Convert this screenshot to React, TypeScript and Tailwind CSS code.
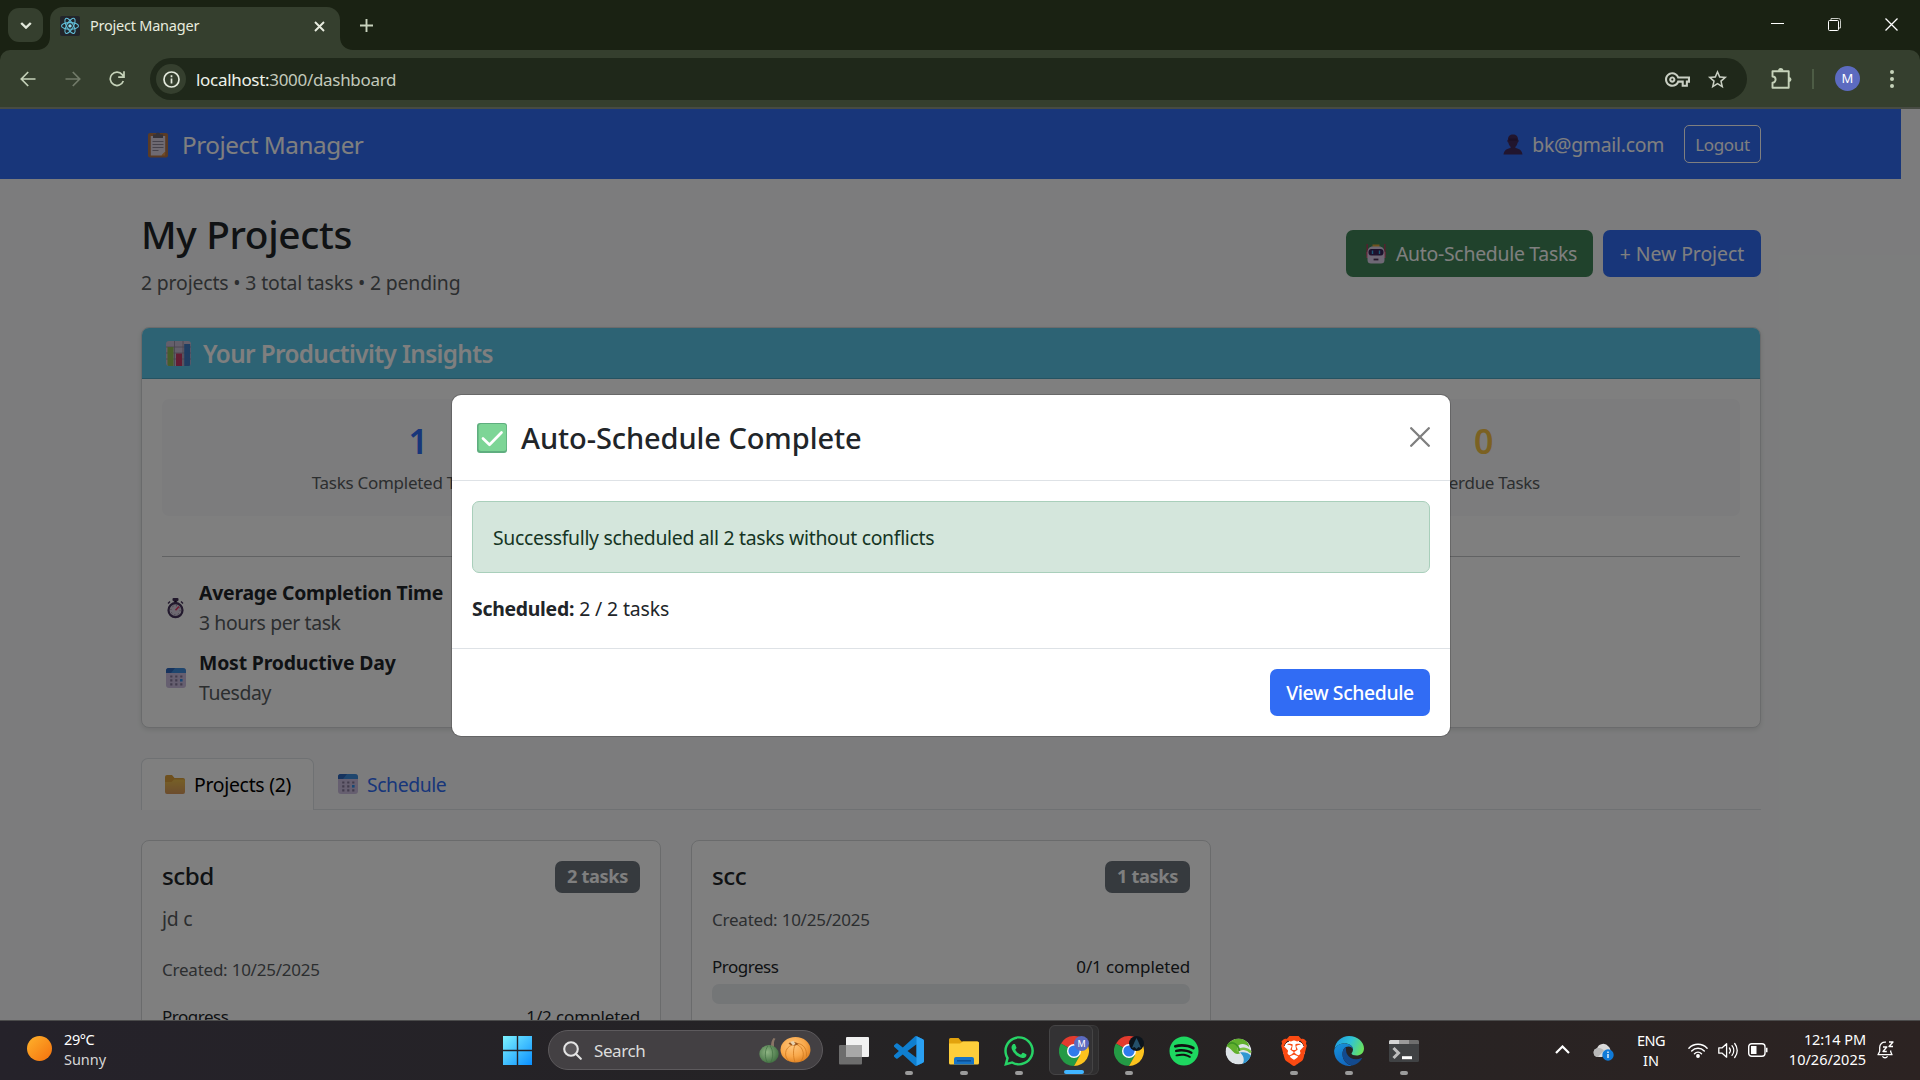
import React from "react";
import { FaSpotify, FaWhatsapp } from "react-icons/fa";
import { SiBrave } from "react-icons/si";
import { MdOutlineVpnKey, MdStarOutline } from "react-icons/md";

/* ---------- emoji-style pictures ---------- */

const Clipboard = () => (
  <svg className="mt-[2px] h-[26px] w-5" viewBox="0 0 20 26">
    <rect x="0" y="1" width="20" height="24.5" rx="2" fill="#b5764a" />
    <path d="M2.8 4h14.4v16l-3.4 3.4h-11z" fill="#dcd5e4" />
    <path d="M17.2 19.5v4h-4z" fill="#e5964c" />
    <path d="M5 2.500h2.500a2.600 2.600 0 0 1 5 0H15V6H5z" fill="#6b6573" />
    <path d="M4.500 9.500h11M4.500 12.500h11M4.500 15.500h11M4.500 18.500h6" stroke="#8d8699" strokeWidth="1" />
  </svg>
);

const Person = () => (
  <svg className="h-[21px] w-5" viewBox="0 0 20 21">
    <path d="M5 5.500C5 2 6.800.5 10 .5s5 1.500 5 5c.9.3.9 2.700-.3 3-.5 2.400-1.500 3.700-2.300 4.300v1.200c3.600.5 6.600 2.300 7.100 6.500H.5c.5-4.200 3.500-6 7.100-6.500v-1.200C6.800 12.200 5.800 10.900 5.300 8.500 4.100 8.200 4.100 5.800 5 5.500z" fill="#432b5c" />
    <path d="M5.800 4.500h8.400v2.200H5.800z" fill="#38204d" />
  </svg>
);

const Robot = () => (
  <svg className="h-[21px] w-5" viewBox="0 0 20 21">
    <path d="M1.200 1v11M18.800 1v11" stroke="#b13a5e" strokeWidth="1.400" />
    <path d="M6.500 1.500h7V4h-7z" fill="#e0a43a" />
    <path d="M.5 9h2v6h-2zM17.500 9h2v6h-2z" fill="#e2557e" />
    <path d="M1.500 9.500c0-4 2.500-6 5-6h7c2.500 0 5 2 5 6V17a3.500 3.500 0 0 1-3.500 3.500H5A3.500 3.500 0 0 1 1.500 17z" fill="#ddd0ea" />
    <rect x="2.500" y="6" width="15" height="6.600" rx="3" fill="#3a2458" />
    <path d="M6.500 7.500v3.400M13.500 7.500v3.400" stroke="#38b4ee" strokeWidth="1.400" />
    <path d="M7.600 16.500h4.800" stroke="#4a3557" strokeWidth="1.800" />
  </svg>
);

const BarChart = () => (
  <svg className="size-[25px]" viewBox="0 0 25 25">
    <rect width="25" height="25" rx="3" fill="#c9bed6" />
    <path d="M0 6h25M0 12h25M0 18h25M8.500 0v25M17 0v25" stroke="#8f869c" strokeWidth=".8" />
    <path d="M1.500 6h6v19H3a1.500 1.500 0 0 1-1.500-1.500z" fill="#8ebd55" />
    <path d="M10 12.500h6V25h-6z" fill="#c83a67" />
    <path d="M18.200 3h6v20.500a1.500 1.500 0 0 1-1.500 1.500h-4.500z" fill="#3e7cc4" />
  </svg>
);

const Stopwatch = () => (
  <svg className="h-[21px] w-[17px]" viewBox="0 0 17 21">
    <rect x="5.500" y="0" width="6" height="3" rx="1" fill="#443159" />
    <path d="M7.500 2h2v3h-2zM1 5.500l2-2M16 5.500l-2-2" stroke="#443159" strokeWidth="1.400" />
    <circle cx="8.500" cy="12.200" r="7" fill="#dad2e2" stroke="#46355c" strokeWidth="2.200" />
    <circle cx="8.500" cy="12.200" r="4.600" fill="none" stroke="#7b6e8a" strokeWidth="1" strokeDasharray="1 2.600" />
    <path d="M8.500 12.200L12 8.500" stroke="#ea3466" strokeWidth="1.500" />
  </svg>
);

const Calendar = () => (
  <svg className="size-5" viewBox="0 0 20 20">
    <rect width="20" height="20" rx="3" fill="#cdbfe0" />
    <path d="M0 5V3a3 3 0 0 1 3-3h14a3 3 0 0 1 3 3v2z" fill="#3f8cdc" />
    <path d="M0 5V3a3 3 0 0 1 3-3h6L5 5z" fill="#2c66bd" />
    <path
      d="M4.200 7.400h2.200v2.200H4.200zM9.200 7.400h2.200v2.200H9.200zM14.200 7.400h2.200v2.200h-2.200zM4.200 11.300h2.200v2.200H4.200zM9.200 11.300h2.200v2.200H9.200zM4.200 15.200h2.200v2.200H4.200zM9.200 15.200h2.200v2.200H9.200zM14.200 15.200h2.200v2.200h-2.200z"
      fill="#84799a"
    />
    <path d="M14 11h2.600v2.600H14z" fill="#2f8fe8" />
  </svg>
);

const Folder = () => (
  <svg className="h-[19px] w-5" viewBox="0 0 20 19">
    <path d="M0 2a2 2 0 0 1 2-2h5l2.500 3H18a2 2 0 0 1 2 2v6H0z" fill="#dca03c" />
    <path d="M0 7h6.500L9 4.500h9.500A1.500 1.500 0 0 1 20 6v11a2 2 0 0 1-2 2H2a2 2 0 0 1-2-2z" fill="url(#fold)" />
    <defs>
      <linearGradient id="fold" x1="0" y1="0" x2="0" y2="1">
        <stop offset="0" stopColor="#edbf4e" />
        <stop offset="1" stopColor="#d99a5c" />
      </linearGradient>
    </defs>
  </svg>
);

const CheckBox = () => (
  <svg className="size-[30px]" viewBox="0 0 30 30">
    <rect width="30" height="30" rx="3" fill="#5fae7f" />
    <rect x="1.600" y="1" width="27.600" height="27" rx="2.500" fill="#7dd596" />
    <path d="M6 15.500l6.500 6.200L24.500 9.500" fill="none" stroke="#fff" strokeWidth="2.700" strokeLinecap="round" strokeLinejoin="round" />
  </svg>
);

/* ---------- browser chrome ---------- */

const ReactLogo = () => (
  <svg className="size-5" viewBox="0 0 20 20">
    <rect width="20" height="20" rx="2" fill="#22252a" />
    <g fill="none" stroke="#62bfda" strokeWidth="1.050">
      <ellipse cx="10" cy="9.900" rx="8.500" ry="3.300" />
      <ellipse cx="10" cy="9.900" rx="8.500" ry="3.300" transform="rotate(60 10 9.900)" />
      <ellipse cx="10" cy="9.900" rx="8.500" ry="3.300" transform="rotate(120 10 9.900)" />
    </g>
    <circle cx="10" cy="9.900" r="1.700" fill="#8adcf2" />
  </svg>
);

const TabStrip = () => (
  <div className="flex h-[50px] bg-[#1a2213]">
    <div className="ml-2 mt-2 flex h-[34px] w-[35px] items-center justify-center rounded-[11px] bg-[#353f2e]">
      <svg className="h-[7px] w-3" viewBox="0 0 12 7" fill="none" stroke="#e3e9dc" strokeWidth="2.400">
        <path d="M1.200 1L6 5.600 10.800 1" />
      </svg>
    </div>
    <div className="-ml-[6px] mt-[7px] flex h-[43px] w-[316px]">
      <svg className="mt-[30px] h-[13px] w-[13px] shrink-0" viewBox="0 0 13 13">
        <path d="M13 0v13H0C7 13 13 8 13 0z" fill="#353f2e" />
      </svg>
      <div className="flex h-[43px] w-[291px] items-center rounded-t-[13px] bg-[#353f2e] pb-[7px] pl-[10px] pr-[15px]">
        <div className="mt-px"><ReactLogo /></div>
        <span className="ml-[10px] mt-[2px] text-[14.500px] tracking-[-0.230px] text-[#e8ecdf]">Project Manager</span>
        <svg className="ml-auto mt-[2px] size-[11px]" viewBox="0 0 11 11" stroke="#e8ecdf" strokeWidth="1.900">
          <path d="M1 1l9 9M10 1l-9 9" />
        </svg>
      </div>
      <svg className="mt-[30px] h-[13px] w-[13px] shrink-0" viewBox="0 0 13 13">
        <path d="M0 0v13h13C6 13 0 8 0 0z" fill="#353f2e" />
      </svg>
    </div>
    <svg className="ml-[7px] mt-[19px] size-[13px]" viewBox="0 0 13 13" stroke="#c8d2bd" strokeWidth="1.900">
      <path d="M6.500 0v13M0 6.500h13" />
    </svg>
    <div className="ml-auto mr-[22px] mt-[18px] flex gap-11">
      <svg className="h-[13px] w-[13px]" viewBox="0 0 13 13" stroke="#fff"><path d="M0 5.500h13" /></svg>
      <svg className="h-[13px] w-[13px]" viewBox="0 0 13 13" fill="none" stroke="#fff">
        <path d="M3 2.500V.5h7.500a2 2 0 0 1 2 2V10h-2" stroke="#c6c9c3" />
        <rect x=".5" y="2.500" width="10" height="10" rx="1" />
      </svg>
      <svg className="h-[13px] w-[13px]" viewBox="0 0 13 13" stroke="#fff" strokeWidth="1.300"><path d="M.5.5l12 12M12.500.5l-12 12" /></svg>
    </div>
  </div>
);

const Toolbar = () => (
  <div className="bg-[#1a2213]">
    <div className="flex h-[57px] rounded-t-[10px] bg-[#353f2e] pt-2">
      <svg className="ml-5 mt-[13px] size-4" viewBox="0 0 16 16" fill="none" stroke="#c5d2b9" strokeWidth="1.700">
        <path d="M15.500 8H1.500M8.200 1L1.300 8l6.900 7" />
      </svg>
      <svg className="ml-[29px] mt-[13px] size-4" viewBox="0 0 16 16" fill="none" stroke="#727b69" strokeWidth="1.700">
        <path d="M.5 8h14M7.800 1l6.900 7-6.900 7" />
      </svg>
      <svg className="ml-[28px] mt-[13px] size-4" viewBox="0 0 16 16" fill="none" stroke="#c5d2b9" strokeWidth="1.700">
        <path d="M14.300 10A6.700 6.700 0 1 1 13.200 3.600L14.700 5.500M15 .3v5.800H9.200" />
      </svg>
      <div className="ml-[25px] flex h-[42px] w-[1597px] items-center rounded-full bg-[#1f281a] pl-[6px] pr-[18px]">
        <div className="flex size-[30px] items-center justify-center rounded-full bg-[#353f2e]">
          <svg className="size-[17px]" viewBox="0 0 17 17" fill="none" stroke="#e3e9dc" strokeWidth="1.700">
            <circle cx="8.500" cy="8.500" r="7.500" />
            <path d="M8.500 7.600v4.900M8.500 4.300v1.900" />
          </svg>
        </div>
        <span className="ml-[10px] mt-px text-[17px] tracking-[-0.310px] text-[#c3cabc]">
          <span className="text-[#eef2e9]">localhost:</span>3000/dashboard
        </span>
        <MdOutlineVpnKey className="ml-auto size-[25px] text-[#c9cfc3]" />
        <MdStarOutline className="ml-[16px] size-[23px] text-[#c9cfc3]" />
      </div>
      <svg className="ml-6 mt-[10px] h-[22px] w-[22px]" viewBox="0 0 22 22" fill="none" stroke="#c5d2b9" strokeWidth="1.900" strokeLinejoin="round">
        <path d="M1.500 3.200h16.200v16.600H1.500v-5.100a2.900 2.900 0 0 0 0-6.200z" />
        <path d="M7 2.800a2.700 2.700 0 0 1 5.400 0zM18 9a2.500 2.500 0 0 1 0 5z" fill="#c5d2b9" stroke="none" />
      </svg>
      <div className="ml-[19px] mt-[11px] h-5 w-[2px] bg-[#4d5c45]" />
      <div className="ml-[21px] mt-2 flex size-[25px] items-center justify-center rounded-full bg-[#5c6bc0] text-[13px] text-white">M</div>
      <div className="ml-[30px] mt-3 flex flex-col gap-[3px]">
        <div className="size-1 rounded-full bg-[#c5d2b9]" />
        <div className="size-1 rounded-full bg-[#c5d2b9]" />
        <div className="size-1 rounded-full bg-[#c5d2b9]" />
      </div>
    </div>
    <div className="h-[2px] bg-[#474b43]" />
  </div>
);

/* ---------- dashboard ---------- */

const Navbar = () => (
  <nav className="mr-[19px] flex h-[70px] items-center bg-[#316cf4] pl-[148px] pr-[140px] text-white">
    <Clipboard />
    <span className="ml-[14px] mt-[2px] text-[24.250px] tracking-[-0.460px]">Project Manager</span>
    <div className="ml-auto flex items-center">
      <Person />
      <span className="ml-[9px] mt-[2px] text-[19.400px] tracking-[-0.280px]">bk@gmail.com</span>
      <div className="ml-[20px] flex h-[38px] w-[77px] items-center justify-center rounded-[5px] border border-white pt-px text-[17px] tracking-[-0.330px]">
        Logout
      </div>
    </div>
  </nav>
);

const PageHeader = () => (
  <div className="flex items-start justify-between">
    <div>
      <h2 className="translate-y-px text-[38.800px] leading-[48px] font-medium tracking-[-0.330px]">My Projects</h2>
      <p className="mt-[10px] translate-y-px text-[19.400px] leading-[30px] tracking-[-0.150px] text-[#585c5f]">
        2 projects • 3 total tasks • 2 pending
      </p>
    </div>
    <div className="mt-[21px] flex gap-[10px] text-[19.400px] text-white">
      <div className="flex h-[47px] w-[247px] items-center rounded-[7px] bg-[#408458] pl-5">
        <Robot />
        <span className="ml-[10px] tracking-[-0.270px]">Auto-Schedule Tasks</span>
      </div>
      <div className="flex h-[47px] w-[158px] items-center justify-center rounded-[7px] bg-[#316cf4]">
        <span className="tracking-[-0.060px]">+ New Project</span>
      </div>
    </div>
  </div>
);

const Stat = ({ value, label, tone }: { value: string; label: string; tone: string }) => (
  <div className="flex h-[117px] flex-col items-center rounded-[7px] bg-[#f8f9fa] pt-[21px]">
    <div className={`text-[34px] leading-[42px] font-semibold ${tone}`}>{value}</div>
    <div className="mt-[8px] text-[17px] leading-[26px] tracking-[-0.270px] text-[#585c5f]">{label}</div>
  </div>
);

const Insight = ({ icon, title, value, spacing, valueSpacing }: { icon: React.ReactNode; title: string; value: string; spacing: string; valueSpacing: string }) => (
  <div className="flex items-center">
    <div className="mr-[10px] flex w-[27px] justify-center">{icon}</div>
    <div className="text-[19.400px] leading-[30px]">
      <div className={`font-bold ${spacing}`}>{title}</div>
      <div className={`text-[#585c5f] ${valueSpacing}`}>{value}</div>
    </div>
  </div>
);

const InsightsCard = () => (
  <div className="mt-[30px] h-[401px] overflow-hidden rounded-[8px] border border-[#d5d7d9] bg-white shadow-[0_2px_5px_rgba(0,0,0,0.100)]">
    <div className="flex h-[51px] items-center border-b border-[#4aa6c4] bg-[#5ac6e8] pl-6 text-white">
      <BarChart />
      <span className="ml-[12px] mt-[2px] text-[24.250px] font-semibold tracking-[-0.600px]">Your Productivity Insights</span>
    </div>
    <div className="px-5">
      <div className="mt-5 grid grid-cols-3 gap-5">
        <Stat value="1" label="Tasks Completed This Week" tone="text-[#316cf4]" />
        <Stat value="2" label="Pending Tasks" tone="text-[#408458]" />
        <Stat value="0" label="Overdue Tasks" tone="text-[#f6c344]" />
      </div>
      <div className="mt-10 border-t border-[#c2c4c6]" />
      <div className="mt-[21px] flex flex-col gap-[10px]">
        <Insight icon={<Stopwatch />} title="Average Completion Time" value="3 hours per task" spacing="tracking-[-0.230px]" valueSpacing="tracking-[-0.380px]" />
        <Insight icon={<Calendar />} title="Most Productive Day" value="Tuesday" spacing="tracking-[-0.160px]" valueSpacing="tracking-[-0.370px]" />
      </div>
    </div>
  </div>
);

const Tabs = () => (
  <div className="mt-[30px] flex h-[52px] items-end border-b border-[#dee2e6] text-[19.400px]">
    <div className="-mb-px flex h-[52px] w-[173px] items-center rounded-t-[7px] border border-b-0 border-[#dee2e6] bg-white pl-[23px] text-black">
      <Folder />
      <span className="ml-[9px] tracking-[-0.280px]">Projects (2)</span>
    </div>
    <div className="flex h-[51px] items-center pl-6 text-[#316cf4]">
      <Calendar />
      <span className="ml-[9px] mt-[2px] tracking-[-0.420px]">Schedule</span>
    </div>
  </div>
);

const ProjectCard = ({ name, tasks, description, done }: { name: string; tasks: string; description?: string; done: string }) => (
  <div className="h-[300px] rounded-[8px] border border-[#d5d7d9] bg-white px-5 pt-5">
    <div className="flex items-start justify-between">
      <h5 className="text-[24.250px] leading-[30px] font-medium tracking-[-0.500px]">{name}</h5>
      <div className="flex h-8 w-[85px] items-center justify-center rounded-[7px] bg-[#6c757d] pb-px text-[18.200px] leading-none font-bold tracking-[-0.340px] text-white">
        {tasks}
      </div>
    </div>
    {description && <p className="mt-[11px] text-[19.400px] leading-[30px] tracking-[-0.200px] text-[#585c5f]">{description}</p>}
    <p className={`text-[17px] leading-[26px] tracking-[-0.230px] text-[#585c5f] ${description ? "mt-[23px]" : "mt-[14px]"}`}>
      Created: 10/25/2025
    </p>
    <div className="mt-[21px] flex justify-between text-[17px] leading-[26px]">
      <span className="tracking-[-0.480px]">Progress</span>
      <span className="tracking-[-0.110px]">{done}</span>
    </div>
    <div className="mt-[4px] h-5 rounded-[7px] bg-[#e9ecef]">
      {description && <div className="h-5 w-1/2 rounded-l-[7px] bg-[#316cf4]" />}
    </div>
  </div>
);

const Modal = () => (
  <div className="flex h-[341px] w-[998px] flex-col rounded-[9px] bg-white shadow-[0_0_0_1px_rgba(0,0,0,0.180)]">
    <div className="flex h-[86px] items-center border-b border-[#dee2e6] pr-5 pl-[25px]">
      <CheckBox />
      <span className="ml-[14px] text-[29px] font-medium tracking-[-0.080px]">Auto-Schedule Complete</span>
      <svg className="ml-auto mb-[2px] size-5" viewBox="0 0 20 20" stroke="#7f7f7f" strokeWidth="2.300" strokeLinecap="round">
        <path d="M1.200 1.200l17.600 17.600M18.800 1.200L1.200 18.800" />
      </svg>
    </div>
    <div className="h-[168px] border-b border-[#dee2e6] px-5 pt-5">
      <div className="flex h-[72px] items-center rounded-[7px] border border-[#a9cfbb] bg-[#d4e6dc] px-5 text-[19.400px] tracking-[-0.300px] text-[#153524]">
        <span className="mt-[2px]">Successfully scheduled all 2 tasks without conflicts</span>
      </div>
      <p className="mt-5 translate-y-px text-[19.400px] leading-[30px]">
        <b className="tracking-[-0.270px]">Scheduled:</b> <span className="tracking-[-0.120px]">2 / 2 tasks</span>
      </p>
    </div>
    <div className="flex justify-end px-5 pt-[20px]">
      <div className="flex h-[47px] w-40 items-center justify-center rounded-[7px] bg-[#316cf4] text-[19.400px] font-medium tracking-[-0.390px] text-white">
        View Schedule
      </div>
    </div>
  </div>
);

const Dashboard = () => (
  <main className="relative h-[911px] overflow-hidden bg-[#f8f9fa] text-[#212529]">
    <Navbar />
    <div className="pt-[30px] pr-[159px] pl-[141px]">
      <PageHeader />
      <InsightsCard />
      <Tabs />
      <div className="mt-[30px] grid grid-cols-3 gap-[30px]">
        <ProjectCard name="scbd" tasks="2 tasks" description="jd c" done="1/2 completed" />
        <ProjectCard name="scc" tasks="1 tasks" done="0/1 completed" />
      </div>
    </div>
    <div className="absolute inset-0 flex items-start justify-center bg-black/50 pt-[286px] pr-[18px]">
      <Modal />
    </div>
  </main>
);

/* ---------- taskbar ---------- */

const WindowsLogo = () => (
  <svg className="size-[29px]" viewBox="0 0 29 29">
    <defs>
      <linearGradient id="win" x1="0" y1="0" x2="1" y2="1">
        <stop offset="0" stopColor="#7df3ff" />
        <stop offset="1" stopColor="#0a8fff" />
      </linearGradient>
    </defs>
    <path d="M0 0h13.800v13.800H0zM15.200 0H29v13.800H15.200zM0 15.200h13.800V29H0zM15.200 15.200H29V29H15.200z" fill="url(#win)" />
  </svg>
);

const Pumpkins = () => (
  <svg className="h-[28px] w-[52px]" viewBox="0 0 52 28">
    <defs>
      <radialGradient id="gourd" cx=".4" cy=".4" r=".65">
        <stop offset="0" stopColor="#8fb584" />
        <stop offset="1" stopColor="#3f6e40" />
      </radialGradient>
      <radialGradient id="pumpkin" cx=".4" cy=".35" r=".7">
        <stop offset="0" stopColor="#ffc67c" />
        <stop offset=".6" stopColor="#f9a84a" />
        <stop offset="1" stopColor="#dd7f20" />
      </radialGradient>
    </defs>
    <path d="M12 10.500c0-3 .5-6 2.500-8.500l2 .8C14.600 5 14.800 8 15.200 11.500z" fill="#8a7566" />
    <ellipse cx="10" cy="18" rx="9.700" ry="9" fill="url(#gourd)" />
    <path d="M9 10c-3.500 4-3.500 12-.5 16.500M11 10c3.500 4 3.500 12 .5 16.500" fill="none" stroke="#3f6e40" strokeWidth=".7" />
    <ellipse cx="36.500" cy="13.700" rx="15" ry="12.800" fill="url(#pumpkin)" />
    <path d="M33 9c-8 3-8 12-3 16M36 9c-2 4-2 12 0 17M38 8.500c7 3 8 12 4 16.500M39 7.500c6 1 9 6 8.500 13" fill="none" stroke="#d07a20" strokeWidth=".8" />
    <path d="M29.500 7.500c2.500-2 7-2 10 .5-2 1-3 1.500-5 1.500s-4-.8-5-2z" fill="#9c551a" />
    <path d="M31 6l3.500-1 2 3-2.500 1.600z" fill="#e8d3b0" />
  </svg>
);

const TaskView = () => (
  <svg className="size-[30px]" viewBox="0 0 30 30">
    <rect x="7" y="1" width="23" height="20" rx="1" fill="#f1f1f1" />
    <rect x="0" y="9" width="23" height="19.500" rx="1" fill="#6d6d6d" />
    <rect x="7" y="9" width="16" height="12" fill="#a8a8a8" />
  </svg>
);

const VsCode = () => (
  <svg className="size-[30px]" viewBox="0 0 24 24">
    <path fill="#0f7fd0" d="M23.150 2.587L18.210.21a1.494 1.494 0 0 0-1.705.29l-9.460 8.630-4.120-3.128a.999.999 0 0 0-1.276.057L.327 7.261A1 1 0 0 0 .326 8.740L3.899 12 .326 15.260a1 1 0 0 0 .001 1.479L1.650 17.940a.999.999 0 0 0 1.276.057l4.120-3.128 9.460 8.630a1.492 1.492 0 0 0 1.704.29l4.942-2.377A1.500 1.500 0 0 0 24 20.060V3.939a1.500 1.500 0 0 0-.85-1.352zm-5.146 14.861L10.826 12l7.178-5.448v10.896z" />
    <path fill="#2aa0f2" d="M18 .2l5.150 2.387A1.500 1.500 0 0 1 24 3.939V20.060a1.500 1.500 0 0 1-.85 1.352L18 23.800z" />
  </svg>
);

const Explorer = () => (
  <svg className="size-[30px]" viewBox="0 0 30 30">
    <path d="M0 3.500A1.500 1.500 0 0 1 1.500 2h8l3 3.500H28a2 2 0 0 1 2 2V10H0z" fill="#e2a20d" />
    <path d="M0 7.500h11l3-2h14.500A1.500 1.500 0 0 1 30 7v20a1.500 1.500 0 0 1-1.500 1.500h-27A1.500 1.500 0 0 1 0 27z" fill="#fdce3b" />
    <path d="M5 28.500V23a2 2 0 0 1 2-2h16a2 2 0 0 1 2 2v5.500z" fill="#1673c6" />
    <path d="M8 24.800h14" stroke="#0b4f94" strokeWidth="1.500" />
  </svg>
);

const Chrome = ({ badge }: { badge: React.ReactNode }) => (
  <svg className="size-[30px]" viewBox="0 0 30 30">
    <path d="M15 15L2 7.500A15 15 0 0 1 28 7.500z" fill="#e33b2e" />
    <path d="M15 15L2 7.500A15 15 0 0 0 15 30l6.500-11z" fill="#249a45" />
    <path d="M15 8h13.300A15 15 0 0 1 15 30l6.200-11z" fill="#fcc31e" />
    <circle cx="15" cy="15" r="7" fill="#fff" />
    <circle cx="15" cy="15" r="5.600" fill="#2f7bec" />
    {badge}
  </svg>
);

const Globe = () => (
  <svg className="size-[27px]" viewBox="0 0 27 27">
    <defs>
      <clipPath id="disc"><circle cx="13.500" cy="13.500" r="13" /></clipPath>
    </defs>
    <g clipPath="url(#disc)">
      <circle cx="13.500" cy="13.500" r="13" fill="#dde3e7" />
      <path d="M1 8C4 2 12-1 18 1c4 1.500 6 5 6 8-3-3-7-4-10-2-2 1.500-2 5 1 8.500-2 .8-4 .5-5.500-.5C7 13 5 9.500 1 8z" fill="#62b02e" />
      <path d="M13.500 9c2.500-3 7-3 9.500 0-3-.5-6 0-8 3z" fill="#dde3e7" />
      <path d="M12 13c4-3.500 10-3 14 1.500" stroke="#7cc142" strokeWidth="2.600" fill="none" />
      <path d="M15 14.500c4-1 9 0 12 4-1 5-6 8.500-10.500 9 3-3.500 3.500-9-1.500-13z" fill="#2f97d2" />
      <path d="M2 7C7 3 13 5 14.500 13" stroke="#3f9424" strokeWidth="1.800" fill="none" />
    </g>
  </svg>
);

const Edge = () => (
  <svg className="size-[30px]" viewBox="0 0 30 30">
    <defs>
      <linearGradient id="edgeTop" x1="0" y1=".3" x2="1" y2=".6">
        <stop offset="0" stopColor="#1f9de0" />
        <stop offset=".5" stopColor="#2fc3d6" />
        <stop offset="1" stopColor="#6be25a" />
      </linearGradient>
      <linearGradient id="edgeMid" x1="0" y1="0" x2=".4" y2="1">
        <stop offset="0" stopColor="#1794dc" />
        <stop offset="1" stopColor="#1268bf" />
      </linearGradient>
    </defs>
    <path d="M.5 13C1.500 5.500 7.500 0 15 0c8.500 0 15 6 15 12.500 0 4.500-3.500 7-7.500 7-3 0-5-1-5-2 0-.8 1.500-1.500 1.500-4C19 10 15.500 7.500 11 7.500 6 7.500 2 9.500.5 13z" fill="url(#edgeTop)" />
    <path d="M.1 15C.5 10.500 5 7.500 10.500 7.500c5 0 8.500 2.800 8.500 6 0-1.500-2-3-4.500-3-4 0-6 3.500-6 7.500 0 6 4 10.500 9.500 11.700A15 15 0 0 1 .1 15z" fill="url(#edgeMid)" />
    <path d="M12 11c-2.500 1.500-3.500 4-3.500 7 0 6 4.500 11 10 11.500 4-1 7.500-3.500 9.300-6.700.3-.6-.3-.9-.8-.6-5 2.300-11.500.8-14-4.200-1.200-2.500-1-5-1-7z" fill="#134a8e" />
  </svg>
);

const Terminal = () => (
  <svg className="size-[30px]" viewBox="0 0 30 30">
    <rect x="0" y="4" width="30" height="22" rx="1.500" fill="#404244" />
    <path d="M0 8V5.500A1.500 1.500 0 0 1 1.500 4H10v4z" fill="#d3d3d3" />
    <path d="M10 4h10v4H10z" fill="#9a9a9a" />
    <path d="M20 4h8.500A1.500 1.500 0 0 1 30 5.500V8H20z" fill="#6e6e6e" />
    <path d="M4.500 12l5 5-5 5" fill="none" stroke="#bdbdbd" strokeWidth="3" />
    <path d="M13 21.700h10" stroke="#fff" strokeWidth="3" />
  </svg>
);

const TaskItem = ({ children, running }: { children: React.ReactNode; running?: boolean }) => (
  <div className="flex w-[55px] flex-col items-center pt-[15px]">
    <div className="flex h-[30px] items-center">{children}</div>
    {running && <div className="mt-[5px] h-1 w-2 rounded-full bg-[#9b9b9b]" />}
  </div>
);

const Taskbar = () => (
  <div className="flex h-[60px] border-t border-[#4b4b4b] bg-linear-to-r from-[#25222a] via-[#252324] to-[#2c2322] text-[14.500px] text-white">
    <div className="flex w-[503px] pt-[8px] pl-[26px]">
      <svg className="mt-[6px] size-[27px]" viewBox="0 0 27 27">
        <defs>
          <linearGradient id="sun" x1="0" y1="0" x2="1" y2="1">
            <stop offset="0" stopColor="#ffb32c" />
            <stop offset="1" stopColor="#f4700d" />
          </linearGradient>
        </defs>
        <circle cx="13.500" cy="13.500" r="12.500" fill="url(#sun)" />
      </svg>
      <div className="ml-[11px] leading-5">
        <div className="tracking-[-0.400px]">29°C</div>
        <div className="tracking-[-0.040px] text-[#d6d6d6]">Sunny</div>
      </div>
    </div>
    <div className="pt-[15px]"><WindowsLogo /></div>
    <div className="mt-[9px] ml-4 flex h-10 w-[275px] items-center rounded-full border border-[#5d5a5d] bg-[#434043] pr-[11px] pl-[14px]">
      <svg className="size-[19px]" viewBox="0 0 19 19" fill="none" stroke="#e4e4e4" strokeWidth="2.100" strokeLinecap="round">
        <circle cx="8" cy="8" r="6.800" fill="#5a575a" />
        <path d="M13 13l4.800 4.800" />
      </svg>
      <span className="mt-[2px] ml-[12px] text-[17px] tracking-[-0.430px] text-[#dcdcdc]">Search</span>
      <div className="ml-auto"><Pumpkins /></div>
    </div>
    <div className="ml-[3px] flex">
      <TaskItem><TaskView /></TaskItem>
      <TaskItem running><VsCode /></TaskItem>
      <TaskItem running><Explorer /></TaskItem>
      <TaskItem running><FaWhatsapp className="size-[34px] text-[#27d366]" /></TaskItem>
      <div className="flex w-[55px] pt-[4px]">
        <div className="z-10 ml-[3px] flex h-[50px] w-[44px] shrink-0 flex-col items-center rounded-[6px] border border-[#454445] bg-[#333234] pt-[10px]">
          <div className="ml-[6px]">
            <Chrome
              badge={
                <g>
                  <circle cx="22.500" cy="7.500" r="7.500" fill="#5c6bc0" />
                  <text x="22.500" y="10.700" fontSize="9" textAnchor="middle" fill="#fff">M</text>
                </g>
              }
            />
          </div>
          <div className="mt-[4px] ml-[5px] h-1 w-5 shrink-0 rounded-full bg-[#41b5ff]" />
        </div>
        <div className="-ml-[6px] h-[50px] w-3 shrink-0 rounded-r-[6px] border-y border-r border-[#3a393a] bg-[#2f2e2f]" />
      </div>
      <TaskItem running>
        <Chrome
          badge={
            <g>
              <circle cx="22.500" cy="7.500" r="7.500" fill="#0b141c" />
              <path d="M18 12l2.500-6 2-4 2 4 2.500 6-2.500-1-2 2-2-2z" fill="#24506a" />
            </g>
          }
        />
      </TaskItem>
      <TaskItem>
        <div className="flex size-[30px] items-center justify-center rounded-full bg-[radial-gradient(#111_60%,transparent_62%)]">
          <FaSpotify className="size-[30px] text-[#1ed760]" />
        </div>
      </TaskItem>
      <TaskItem><Globe /></TaskItem>
      <TaskItem running>
        <div className="flex size-[30px] items-center justify-center bg-[radial-gradient(#fff_50%,transparent_52%)]">
          <SiBrave className="size-[30px] text-[#fb4a12]" />
        </div>
      </TaskItem>
      <TaskItem running><Edge /></TaskItem>
      <TaskItem running><Terminal /></TaskItem>
    </div>
    <div className="mr-[26px] ml-auto flex">
      <svg className="mt-[24px] h-[9px] w-[15px]" viewBox="0 0 15 9" fill="none" stroke="#fff" strokeWidth="2.200">
        <path d="M1 8l6.500-6.500L14 8" />
      </svg>
      <svg className="mt-[21px] ml-[23px] h-[20px] w-[21px]" viewBox="0 0 21 20">
        <path d="M4.500 15A4.500 4.500 0 0 1 4 6.200 6.600 6.600 0 0 1 15.500 4.500c1.500 1 2 3 2 5L9 15z" fill="#dadada" />
        <path d="M4 6.200c3-.8 5 0 7 2.300L5 15h-.5A4.500 4.500 0 0 1 4 6.200z" fill="#b8b8b8" />
        <circle cx="15" cy="13" r="5.700" fill="#0f7ad8" />
        <path d="M15 12v4M15 9.500v1.400" stroke="#fff" strokeWidth="1.300" />
      </svg>
      <div className="mt-[9px] ml-[17px] w-10 text-center leading-5">
        <div className="tracking-[-0.500px]">ENG</div>
        <div>IN</div>
      </div>
      <svg className="mt-[21px] ml-[17px] h-[16px] w-[20px]" viewBox="0 0 20 16" fill="none" stroke="#fff" strokeWidth="1.400" strokeLinecap="round">
        <path d="M.9 6.200a12.400 12.400 0 0 1 18.200 0M3.700 9a8.700 8.700 0 0 1 12.600 0M6.500 11.700a5 5 0 0 1 7 0" />
        <circle cx="10" cy="14" r="1.200" fill="#fff" />
      </svg>
      <svg className="mt-[21px] ml-[10px] h-[17px] w-5" viewBox="0 0 20 17" fill="none" stroke="#fff" strokeWidth="1.300" strokeLinejoin="round" strokeLinecap="round">
        <path d="M.8 5.800h3.400L8.600 1.800v13.400L4.200 11.200H.8z" />
        <path d="M11.400 6a4 4 0 0 1 0 5M14 3.700a7.500 7.500 0 0 1 0 9.600M16.700 1.500a11 11 0 0 1 0 14" />
      </svg>
      <svg className="mt-[22px] ml-[10px] h-[14px] w-5" viewBox="0 0 20 14" fill="none" stroke="#fff" strokeWidth="1.400">
        <rect x=".7" y=".7" width="16.300" height="12.600" rx="3" />
        <path d="M3 3h5.500v8H3zM18 4.800h1.500v4.400H18z" fill="#fff" stroke="none" />
      </svg>
      <div className="mt-[8px] ml-[18px] w-20 text-right leading-5">
        <div className="tracking-[-0.080px]">12:14 PM</div>
        <div className="tracking-[0px]">10/26/2025</div>
      </div>
      <svg className="mt-[20px] ml-[11px] h-[18px] w-[17px]" viewBox="0 0 17 18" fill="none" stroke="#fff" strokeWidth="1.300" strokeLinejoin="round">
        <path d="M9 1.200C5 .8 2.700 3 2.700 6.500v3.700L1 13.700h14l-1.300-3V9.500" />
        <path d="M5.500 15.200a2.800 2.800 0 0 0 5 0" />
        <path d="M6 6h3.800L6 10.500h3.800M12 1h4l-4 4.500h4" />
      </svg>
    </div>
  </div>
);

export default function App() {
  return (
    <div className="h-[1080px] w-[1920px] overflow-hidden bg-[#1a2213] font-['Noto_Sans','Open_Sans',sans-serif] leading-normal whitespace-nowrap">
      <TabStrip />
      <Toolbar />
      <Dashboard />
      <Taskbar />
    </div>
  );
}
